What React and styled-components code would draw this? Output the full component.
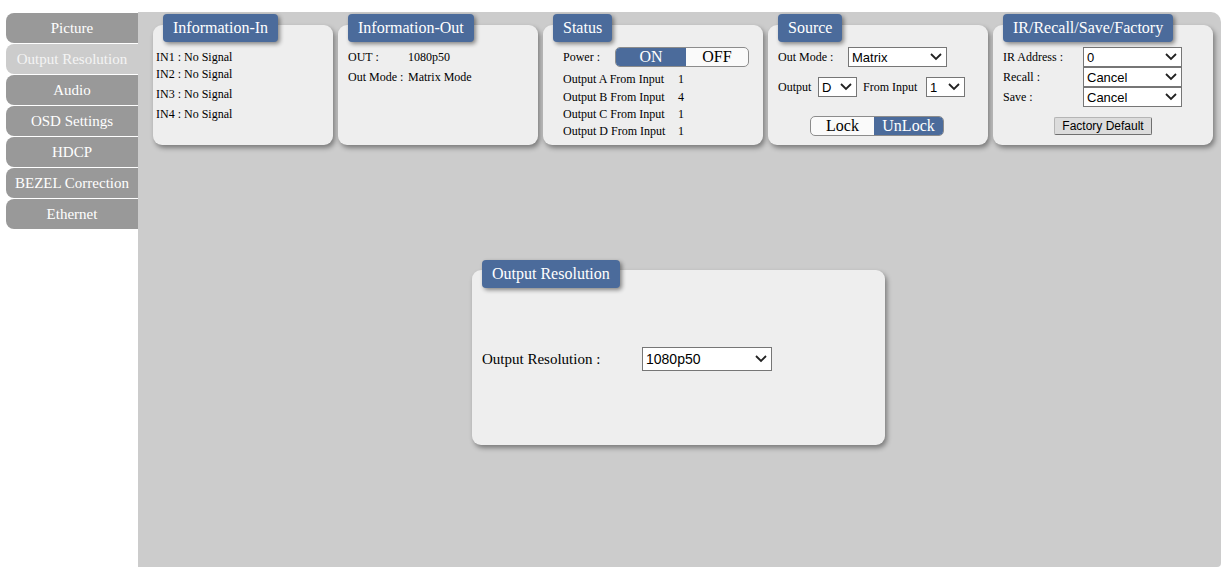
import React from "react";
import styled, { createGlobalStyle } from "styled-components";

const Global = createGlobalStyle`
  html, body { margin: 0; padding: 0; background: #fff; }
  body { font-family: "Liberation Serif", "Times New Roman", serif; color: #000; }
  * { box-sizing: border-box; }
`;

const BLUE = "#4b6b9b";

const Page = styled.div`
  display: flex;
  align-items: flex-start;
  padding: 12px 5px 0 6px;
  width: 1226px;
`;

const Sidebar = styled.nav`
  display: flex;
  flex-direction: column;
  gap: 1px;
  width: 132px;
  padding-top: 1px;
  flex-shrink: 0;
`;

const Tab = styled.div`
  height: 30px;
  line-height: 30px;
  text-align: center;
  font-size: 15px;
  color: ${(p) => (p.$active ? "#f4f4f4" : "#ffffff")};
  background: ${(p) => (p.$active ? "#cccccc" : "#999999")};
  border-radius: 8px 0 0 8px;
  white-space: nowrap;
`;

const Main = styled.main`
  flex: 1;
  height: 555px;
  background: #cccccc;
  border-radius: 0 10px 4px 0;
  padding: 2px 0 0 15px;
  display: flex;
  flex-direction: column;
`;

const TopRow = styled.div`
  display: flex;
  gap: 5px;
`;

const Panel = styled.section`
  display: flex;
  flex-direction: column;
  width: ${(p) => p.$w}px;
`;

const Title = styled.div`
  position: relative;
  z-index: 1;
  align-self: flex-start;
  margin-left: 10px;
  height: 28px;
  line-height: 28px;
  padding: 0 10px;
  background: ${BLUE};
  color: #fff;
  font-size: 16px;
  border-radius: 4px;
  box-shadow: 2px 2px 4px rgba(0, 0, 0, 0.45);
  white-space: nowrap;
`;

const Body = styled.div`
  margin-top: ${(p) => p.$overlap || -17}px;
  height: ${(p) => p.$h}px;
  background: #eeeeee;
  border-radius: 9px;
  box-shadow: 2px 3px 5px rgba(0, 0, 0, 0.4);
  padding: ${(p) => p.$pad};
  font-size: 12px;
`;

const Line = styled.div`
  height: 20px;
  line-height: 20px;
  margin-top: ${(p) => (p.$tight ? "-3px" : "0")};
  white-space: nowrap;
`;

const KV = styled.div`
  display: grid;
  grid-template-columns: ${(p) => p.$cols};
  align-items: center;
  white-space: nowrap;
  height: ${(p) => (p.$h ? p.$h + "px" : "auto")};
  line-height: ${(p) => (p.$h ? p.$h + "px" : "normal")};
`;

const StatusRows = styled.div`
  display: grid;
  grid-template-rows: 19px 17px 17px 17px;
  margin-top: 2.5px;
`;

const Toggle = styled.div`
  display: flex;
  flex-shrink: 0;
  width: 134px;
  height: 20px;
  border: 1px solid #8c8c8c;
  border-radius: 5px;
  overflow: hidden;
  background: #fafafa;
`;

const Seg = styled.div`
  flex: ${(p) => p.$grow};
  text-align: center;
  font-size: 16px;
  line-height: 18px;
  color: ${(p) => (p.$on ? "#fff" : "#000")};
  background: ${(p) => (p.$on ? BLUE : "transparent")};
`;

const Row = styled.div`
  display: flex;
  align-items: center;
  gap: ${(p) => p.$gap || 0}px;
  height: ${(p) => p.$h || 20}px;
  margin-top: ${(p) => p.$mt || 0}px;
  white-space: nowrap;
`;

const Label = styled.span`
  display: inline-block;
  flex-shrink: 0;
  width: ${(p) => (p.$w ? p.$w + "px" : "auto")};
  font-size: ${(p) => p.$fs || 12}px;
`;

const SelWrap = styled.div`
  position: relative;
  width: ${(p) => p.$w}px;
  height: ${(p) => p.$h}px;
  flex-shrink: 0;
`;

const NativeSelect = styled.select`
  appearance: none;
  -webkit-appearance: none;
  width: 100%;
  height: 100%;
  border: 1px solid #767676;
  border-radius: 0;
  background: #fff;
  font-family: "Liberation Sans", Arial, sans-serif;
  font-size: ${(p) => p.$fs}px;
  color: #000;
  padding: 0 0 0 3px;
  outline: none;
`;

const Chevron = styled.svg`
  position: absolute;
  right: 5px;
  top: 50%;
  transform: translateY(-50%);
  pointer-events: none;
`;

function Select({ value, w, h = 20, fs = 13 }) {
  return (
    <SelWrap $w={w} $h={h}>
      <NativeSelect $fs={fs} defaultValue={value}>
        <option>{value}</option>
      </NativeSelect>
      <Chevron width="12" height="8" viewBox="0 0 12 8">
        <polyline points="1,1 6,6 11,1" fill="none" stroke="#222" strokeWidth="1.8" />
      </Chevron>
    </SelWrap>
  );
}

const SelStack = styled.div`
  display: grid;
  grid-template-columns: 80px 99px;
  grid-auto-rows: 20px;
  align-items: center;
`;

const Center = styled.div`
  display: flex;
  justify-content: center;
  margin-top: ${(p) => p.$mt}px;
  margin-right: ${(p) => p.$mr || 0}px;
`;

const FactoryButton = styled.button`
  width: 98px;
  height: 18px;
  padding: 0;
  font-family: "Liberation Sans", Arial, sans-serif;
  font-size: 12px;
  color: #000;
  background: #dcdcdc;
  border: 1px solid #b5b5b5;
  border-right-color: #6f6f6f;
  border-bottom-color: #6f6f6f;
  border-radius: 2px;
`;

const ResPanel = styled(Panel)`
  align-self: center;
  margin-top: 115px;
  margin-left: -17px;
`;

const ResBody = styled(Body)`
  display: flex;
  align-items: center;
  padding: 3px 10px 0;
  font-size: 15px;
`;

export default function App() {
  const tabs = ["Picture", "Output Resolution", "Audio", "OSD Settings", "HDCP", "BEZEL Correction", "Ethernet"];
  return (
    <>
      <Global />
      <Page>
        <Sidebar>
          {tabs.map((t) => (
            <Tab key={t} $active={t === "Output Resolution"}>
              {t}
            </Tab>
          ))}
        </Sidebar>
        <Main>
          <TopRow>
            <Panel $w={180}>
              <Title>Information-In</Title>
              <Body $h={120} $pad="22px 3px 0">
                <Line>IN1 : No Signal</Line>
                <Line $tight>IN2 : No Signal</Line>
                <Line>IN3 : No Signal</Line>
                <Line>IN4 : No Signal</Line>
              </Body>
            </Panel>

            <Panel $w={200}>
              <Title>Information-Out</Title>
              <Body $h={120} $pad="22px 10px 0">
                <KV $cols="60px auto" $h={20}>
                  <span>OUT :</span>
                  <span>1080p50</span>
                </KV>
                <KV $cols="60px auto" $h={20}>
                  <span>Out Mode :</span>
                  <span>Matrix Mode</span>
                </KV>
              </Body>
            </Panel>

            <Panel $w={220}>
              <Title>Status</Title>
              <Body $h={120} $pad="22px 0 0 20px">
                <Row>
                  <Label $w={52}>Power :</Label>
                  <Toggle>
                    <Seg $grow={71} $on>ON</Seg>
                    <Seg $grow={63}>OFF</Seg>
                  </Toggle>
                </Row>
                <StatusRows>
                  {[["A", 1], ["B", 4], ["C", 1], ["D", 1]].map(([o, n]) => (
                    <KV key={o} $cols="115px auto">
                      <span>Output {o} From Input</span>
                      <span>{n}</span>
                    </KV>
                  ))}
                </StatusRows>
              </Body>
            </Panel>

            <Panel $w={220}>
              <Title>Source</Title>
              <Body $h={120} $pad="22px 0 0 10px">
                <Row>
                  <Label $w={70}>Out Mode :</Label>
                  <Select value="Matrix" w={99} />
                </Row>
                <Row $mt={10} $gap={6}>
                  <Label $w={34}>Output</Label>
                  <Select value="D" w={39} />
                  <Label $w={57}>From Input</Label>
                  <Select value="1" w={39} />
                </Row>
                <Center $mt={19} $mr={12}>
                  <Toggle>
                    <Seg $grow={64}>Lock</Seg>
                    <Seg $grow={70} $on>UnLock</Seg>
                  </Toggle>
                </Center>
              </Body>
            </Panel>

            <Panel $w={220}>
              <Title>IR/Recall/Save/Factory</Title>
              <Body $h={120} $pad="22px 10px 0">
                <SelStack>
                  <Label>IR Address :</Label>
                  <Select value="0" w={99} />
                  <Label>Recall :</Label>
                  <Select value="Cancel" w={99} />
                  <Label>Save :</Label>
                  <Select value="Cancel" w={99} />
                </SelStack>
                <Center $mt={10}>
                  <FactoryButton>Factory Default</FactoryButton>
                </Center>
              </Body>
            </Panel>
          </TopRow>

          <ResPanel $w={413}>
            <Title>Output Resolution</Title>
            <ResBody $h={175} $overlap={-18}>
              <Label $w={160} $fs={15}>Output Resolution :</Label>
              <Select value="1080p50" w={130} h={24} fs={14} />
            </ResBody>
          </ResPanel>
        </Main>
      </Page>
    </>
  );
}
